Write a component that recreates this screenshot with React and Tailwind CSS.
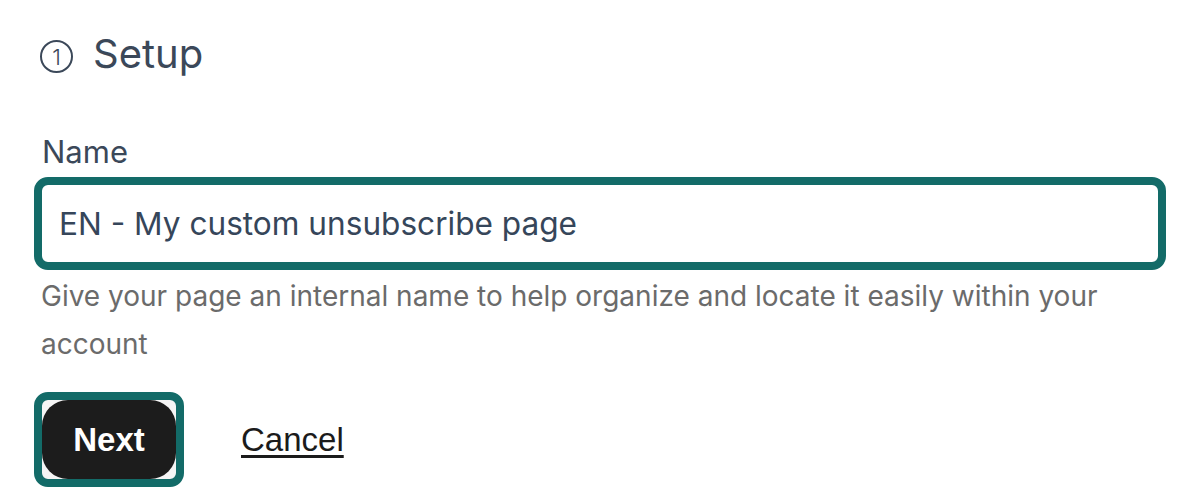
import React, { useState } from "react";

const StepBadge = ({ n }) => (
  <span className="mt-[10px] flex h-[33px] w-[33px] shrink-0 items-center justify-center rounded-full border-2 border-[#3b4859] text-[22px] font-light leading-none text-[#3b4859]">
    {n}
  </span>
);

const App = () => {
  const [name, setName] = useState("EN - My custom unsubscribe page");

  return (
    <div className="min-h-screen bg-white pl-[34px] pt-[30px] font-['Inter',sans-serif]">
      <div className="w-[1132px]">
        {/* Step heading */}
        <h2 className="ml-[6px] flex h-[48px] items-start gap-[20px]">
          <StepBadge n={1} />
          <span className="text-[40px] font-normal leading-[48px] text-[#3b4859]">
            Setup
          </span>
        </h2>

        <form className="mt-[56px]" onSubmit={(e) => e.preventDefault()}>
          <label
            htmlFor="page-name"
            className="ml-[8px] block text-[31px] leading-[36px] text-[#3b4859]"
          >
            Name
          </label>

          <input
            id="page-name"
            type="text"
            value={name}
            onChange={(e) => setName(e.target.value)}
            className="mt-[7px] block h-[93px] w-full rounded-[14px] border-[8px] border-[#136b68] bg-white px-[17px] text-[31.6px] text-[#36465a] outline-none"
          />

          <p className="ml-[7px] mt-[2px] pr-[10px] text-[28px] leading-[48px] text-[#6b6b6b]">
            Give your page an internal name to help organize and locate it easily
            within your account
          </p>

          {/* Actions */}
          <div className="mt-[24px] flex items-center gap-[57px]">
            <div className="rounded-[14px] border-[8px] border-[#136b68] bg-[#f5f5f5]">
              <button
                type="submit"
                className="block h-[79px] w-[134px] rounded-[26px] bg-[#1c1c1c] font-['Liberation_Sans',Arial,sans-serif] text-[33px] font-bold text-white"
              >
                Next
              </button>
            </div>
            <button
              type="button"
              className="font-['Liberation_Sans',Arial,sans-serif] text-[33px] text-[#1b1b1b] underline underline-offset-[4px]"
            >
              Cancel
            </button>
          </div>
        </form>
      </div>
    </div>
  );
};

export default App;
